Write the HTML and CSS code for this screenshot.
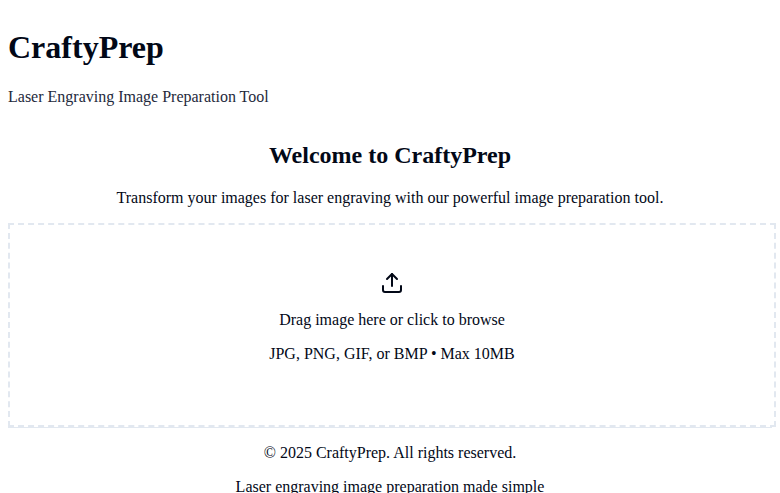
FILE: index.html
```html
<!DOCTYPE html>
<html lang="en">
<head>
<meta charset="utf-8">
<title>CraftyPrep</title>
<link rel="stylesheet" href="styles.css">
</head>
<body>
<div class="page">
<header class="header">
<h1>CraftyPrep</h1>
<p class="tagline">Laser Engraving Image Preparation Tool</p>
</header>
<main class="main">
<h2>Welcome to CraftyPrep</h2>
<p>Transform your images for laser engraving with our powerful image preparation tool.</p>
<div class="dropzone">
<svg class="icon" width="24" height="24" viewBox="0 0 24 24" fill="none" stroke="currentColor" stroke-width="2" stroke-linecap="round" stroke-linejoin="round"><path d="M12 3v12"/><path d="m17 8-5-5-5 5"/><path d="M21 15v4a2 2 0 0 1-2 2H5a2 2 0 0 1-2-2v-4"/></svg>
<p>Drag image here or click to browse</p>
<p>JPG, PNG, GIF, or BMP • Max 10MB</p>
</div>
</main>
<footer class="footer">
<p>© 2025 CraftyPrep. All rights reserved.</p>
<p>Laser engraving image preparation made simple</p>
</footer>
</div>
</body>
</html>
```
FILE: styles.css
```css
body {
  margin: 0;
  background: #fff;
  color: #020817;
  font: 16px/18px "Liberation Serif", serif;
}

.page {
  box-sizing: border-box;
  height: 493px;
  padding: 8px;
  overflow: hidden;
}

h1 {
  margin: 21px 0 22px;
  font-size: 32px;
  line-height: 37px;
}

h2 {
  margin: 20px 0;
  font-size: 24px;
  line-height: 27px;
}

p {
  margin: 16px 0;
}

.header {
  display: flow-root;
}

.tagline {
  color: #1e293b;
}

.main {
  display: flow-root;
  text-align: center;
}

.dropzone {
  box-sizing: border-box;
  display: flex;
  flex-direction: column;
  align-items: center;
  width: 768px;
  height: 204px;
  padding-top: 46px;
  border: 2px dashed #e2e8f0;
}

.dropzone p {
  margin: 16px 0 0;
}

.icon {
  display: block;
}

.footer {
  border-top: 1px solid #e2e8f0;
  text-align: center;
}
```
